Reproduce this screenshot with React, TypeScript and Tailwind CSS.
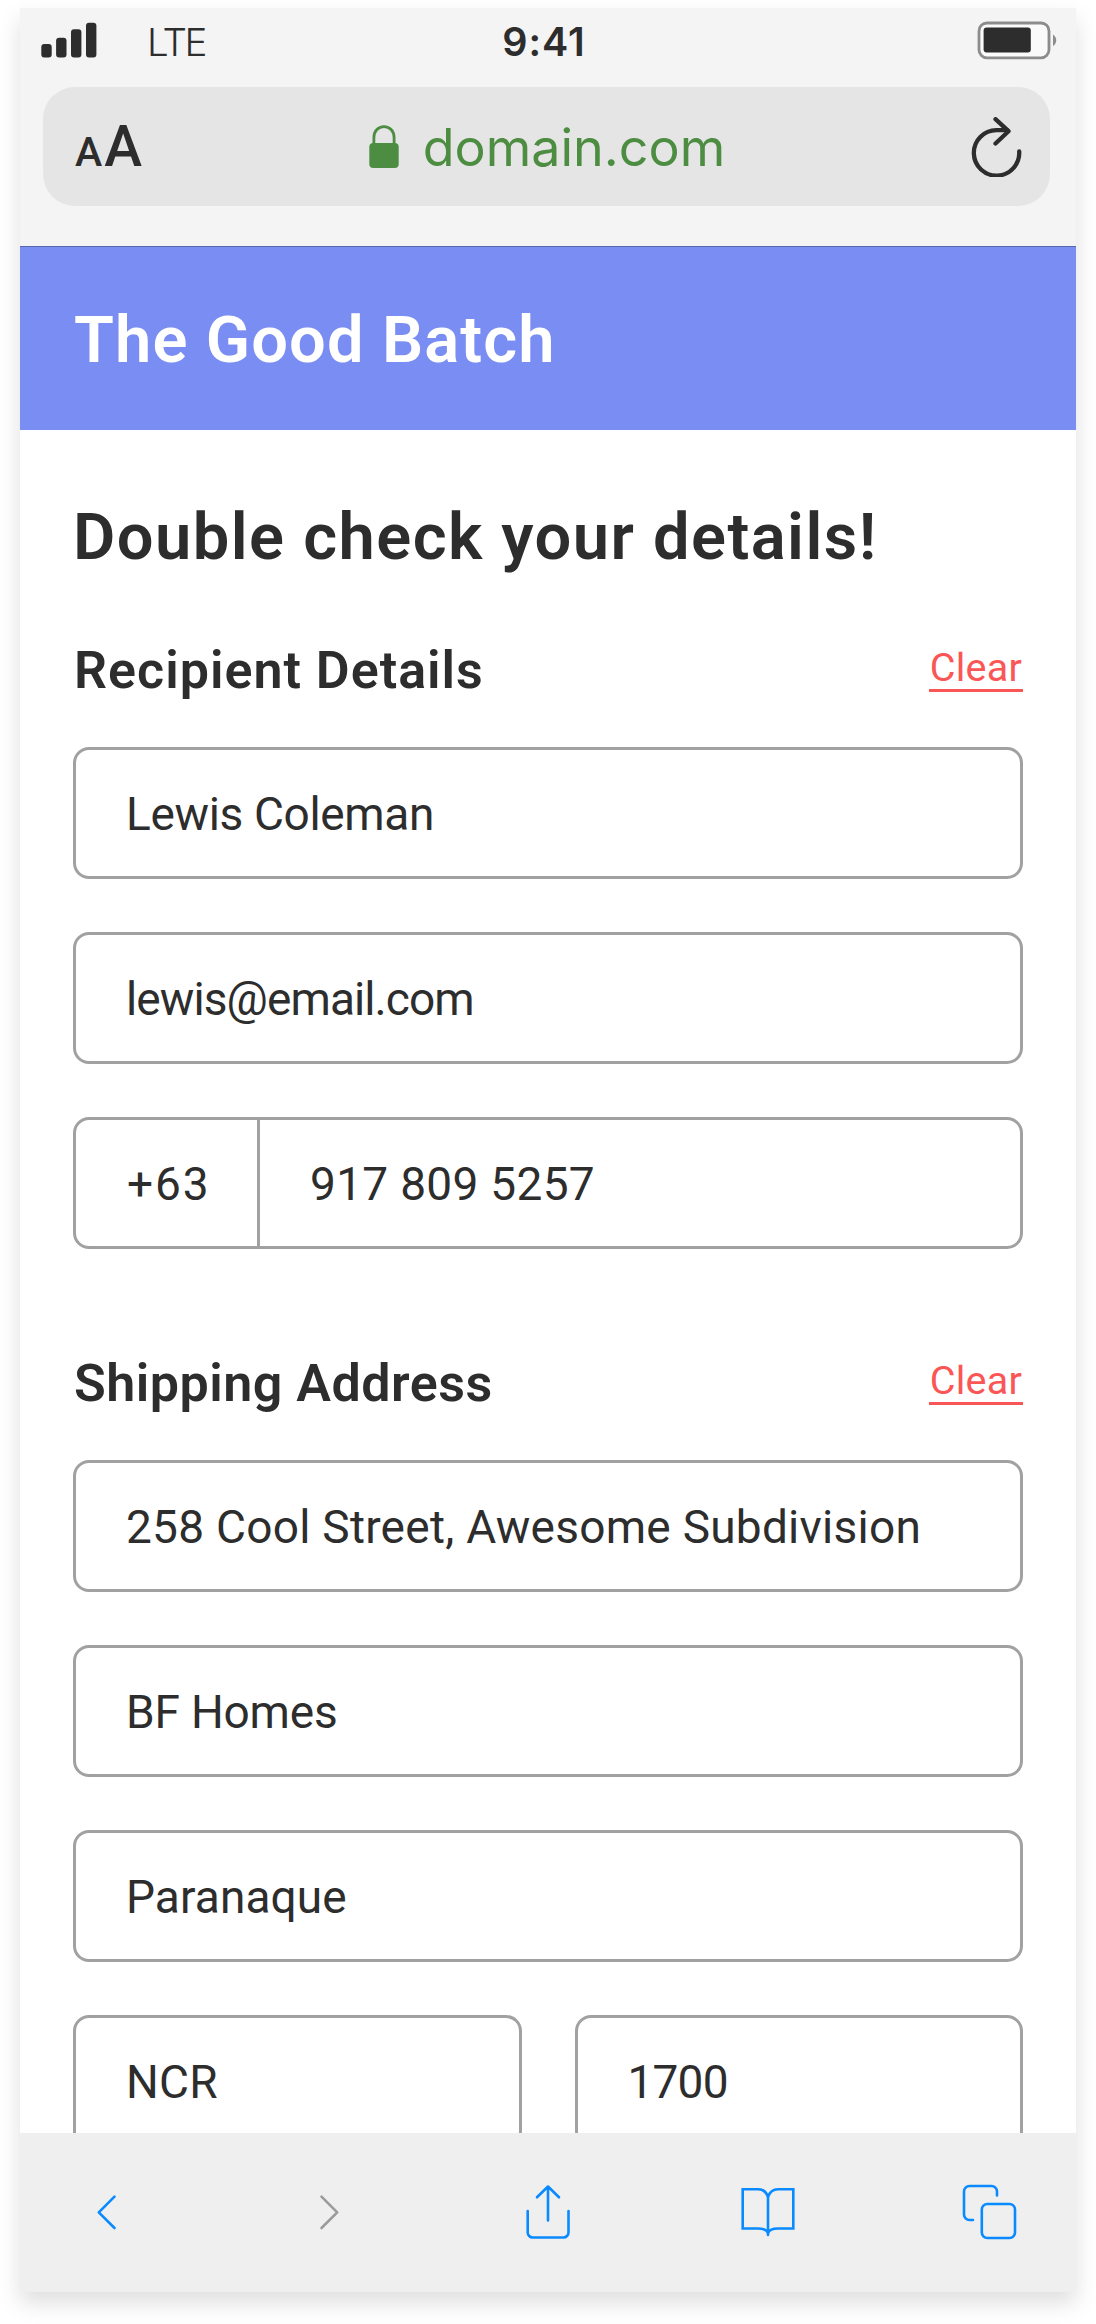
import type { ReactNode } from 'react';

function SignalIcon() {
  return (
    <svg width="56" height="42" viewBox="0 0 56 42" fill="#2d2d2d" className="shrink-0">
      <rect x="0.3" y="23" width="10.4" height="13.4" rx="3" />
      <rect x="15.1" y="16.7" width="10.4" height="19.7" rx="3" />
      <rect x="30" y="8.3" width="10.4" height="28.1" rx="3" />
      <rect x="45" y="1.7" width="10.4" height="34.7" rx="3" />
    </svg>
  );
}

function BatteryIcon() {
  return (
    <svg width="82" height="42" viewBox="0 0 82 42" fill="none" className="shrink-0">
      <rect x="2" y="2" width="70" height="34.8" rx="8" fill="#fafafa" stroke="#8c8c8c" strokeWidth="2.8" />
      <rect x="6.6" y="6.6" width="47.2" height="25" rx="3" fill="#2d2d2d" />
      <path d="M76 13.5a7 7 0 0 1 3.2 5.8 7 7 0 0 1-3.2 5.8z" fill="#8c8c8c" />
    </svg>
  );
}

function LockIcon() {
  return (
    <svg width="30" height="44" viewBox="0 0 30 44" fill="none" className="shrink-0">
      <path d="M4.9 20v-7.5C4.9 6.5 9 1.6 15 1.6s10.1 4.9 10.1 10.9V20" stroke="#4d8d42" strokeWidth="2.8" />
      <rect x="0.3" y="18" width="29.4" height="25" rx="4" fill="#4d8d42" />
    </svg>
  );
}

function ReloadIcon() {
  return (
    <svg width="52" height="60" viewBox="0 0 52 60" fill="none" stroke="#2d2d2d" strokeWidth="4.3" strokeLinecap="round" strokeLinejoin="round" className="shrink-0">
      <path d="M48.2 34.5A22.700 22.700 0 1 1 25.5 13.2H36" />
      <path d="M24.5 2.200L37.5 14.200 24.5 26.500" />
    </svg>
  );
}

function ToolIcon({ children, muted = false }: { children: ReactNode; muted?: boolean }) {
  return (
    <button type="button" className={muted ? 'text-[#9b9b9b]' : 'text-[#0a8aff]'}>
      <svg width="60" height="60" viewBox="0 0 60 60" fill="none" stroke="currentColor" strokeWidth="2.6" strokeLinecap="round" strokeLinejoin="round">
        {children}
      </svg>
    </button>
  );
}

function SectionHeader({ title, tracking }: { title: string; tracking: string }) {
  return (
    <div className="flex h-[52px] items-start justify-between">
      <h2 className={`pl-px text-[52px] leading-[53px] font-semibold whitespace-nowrap ${tracking}`}>{title}</h2>
      <button type="button" className="mt-[2px] w-[94px] border-b-[3px] border-[#fb5656] pt-px text-center text-[39.5px] leading-[42px] tracking-[0.3px] text-[#fb5656]">
        Clear
      </button>
    </div>
  );
}

function Field({ value, tracking }: { value: string; tracking: string }) {
  return (
    <div className={`flex h-[132px] min-w-0 items-center rounded-[16px] border-[3px] border-[#a1a1a1] px-[50px] pt-[3px] text-[46px] whitespace-nowrap ${tracking}`}>
      {value}
    </div>
  );
}

export default function App() {
  return (
    <div className="h-[2324px] w-[1096px] overflow-hidden bg-white px-5 pt-2 font-['Roboto',sans-serif] text-[#2d2d2d]">
      <div className="flex h-[2284px] w-[1056px] flex-col bg-white shadow-[0_11px_21px_rgba(0,0,0,0.13)]">
        <header className="h-[238px] shrink-0 bg-[#f4f4f4]">
          <div className="flex h-[68px] items-center justify-between pr-[17px] pl-[21px] font-['Inter',sans-serif]">
            <div className="flex w-[453px] items-center">
              <SignalIcon />
              <span className="ml-[50px] text-[38.5px] leading-[48px] font-light tracking-[-2.5px]">LTE</span>
            </div>
            <span className="text-[39.5px] leading-[48px] font-semibold tracking-[1px]">9:41</span>
            <div className="flex w-[465px] justify-end">
              <BatteryIcon />
            </div>
          </div>
          <div className="mt-[11px] mr-[26px] ml-[23px] flex h-[119px] items-center justify-between rounded-[32px] bg-[#e5e5e5] pr-[27px] pl-[32px]">
            <div className="flex w-[236px] items-baseline gap-[2px] pt-[5px] font-medium">
              <span className="text-[41px] leading-[60px]">A</span>
              <span className="text-[57px] leading-[60px] tracking-[-2px]">A</span>
            </div>
            <div className="flex items-center gap-[24px] text-[#4d8d42]">
              <LockIcon />
              <span className="pt-[2px] font-['Inter',sans-serif] text-[52px] leading-[60px]">domain.com</span>
            </div>
            <div className="flex w-[240px] justify-end">
              <ReloadIcon />
            </div>
          </div>
        </header>

        <div className="flex h-[184px] shrink-0 items-center border-t border-[#5866ad] bg-[#798df2] px-[54px] pt-[3px]">
          <span className="text-[65px] leading-[65px] font-semibold tracking-[1.1px] text-white">The Good Batch</span>
        </div>

        <main className="h-[1703px] shrink-0 overflow-hidden px-[53px] pt-[75px]">
          <h1 className="text-[65px] leading-[64px] font-semibold tracking-[1.45px] whitespace-nowrap">Double check your details!</h1>

          <section className="mt-[75px]">
            <SectionHeader title="Recipient Details" tracking="tracking-[1px]" />
            <div className="mt-[51px] flex flex-col gap-[53px]">
              <Field value="Lewis Coleman" tracking="tracking-[-0.35px]" />
              <Field value="lewis@email.com" tracking="tracking-[-0.9px]" />
              <div className="flex h-[132px] rounded-[16px] border-[3px] border-[#a1a1a1] text-[46px] whitespace-nowrap">
                <div className="flex w-[184px] items-center border-r-[3px] border-[#a1a1a1] pt-[3px] pl-[51px] tracking-[1.9px]">+63</div>
                <div className="flex items-center pt-[3px] pl-[50px] tracking-[0.3px]">917 809 5257</div>
              </div>
            </div>
          </section>

          <section className="mt-[108px]">
            <SectionHeader title="Shipping Address" tracking="tracking-[0.5px]" />
            <div className="mt-[51px] flex flex-col gap-[53px]">
              <Field value="258 Cool Street, Awesome Subdivision" tracking="tracking-[0.26px]" />
              <Field value="BF Homes" tracking="tracking-[-0.2px]" />
              <Field value="Paranaque" tracking="tracking-[0.1px]" />
              <div className="grid grid-cols-2 gap-[53px]">
                <Field value="NCR" tracking="tracking-[0.3px]" />
                <Field value="1700" tracking="tracking-[-0.8px]" />
              </div>
            </div>
          </section>
        </main>

        <nav className="flex h-[159px] shrink-0 items-center justify-between bg-[#efefef] px-[57px]">
          <ToolIcon>
            <path d="M37.5 13.7L21.8 29.3l15.7 15.7" />
          </ToolIcon>
          <ToolIcon muted>
            <path d="M23.5 13.7l15.7 15.6-15.7 15.7" />
          </ToolIcon>
          <ToolIcon>
            <path d="M30 37.5V3.5M19 14.3L30 3.5l11 10.8" />
            <path d="M9.7 28v21.5a5 5 0 0 0 5 5h30.8a5 5 0 0 0 5-5V28" />
          </ToolIcon>
          <ToolIcon>
            <path strokeLinejoin="miter" d="M29 14C27.5 9.5 24 6.3 19 6.3H3.7v39.2H19c5 0 9 1 10 5 1-4 5-5 10-5h15.3V6.3H39c-5 0-8.5 3.2-10 7.700zM29 14v38" />
          </ToolIcon>
          <ToolIcon>
            <path d="M14 37h-3.5a5.5 5.5 0 0 1-5.5-5.5V8.5A5.5 5.5 0 0 1 10.5 3h22A5.5 5.5 0 0 1 38 8.5V12.5" />
            <rect x="22.8" y="21" width="33.2" height="34" rx="5.5" />
          </ToolIcon>
        </nav>
      </div>
    </div>
  );
}
